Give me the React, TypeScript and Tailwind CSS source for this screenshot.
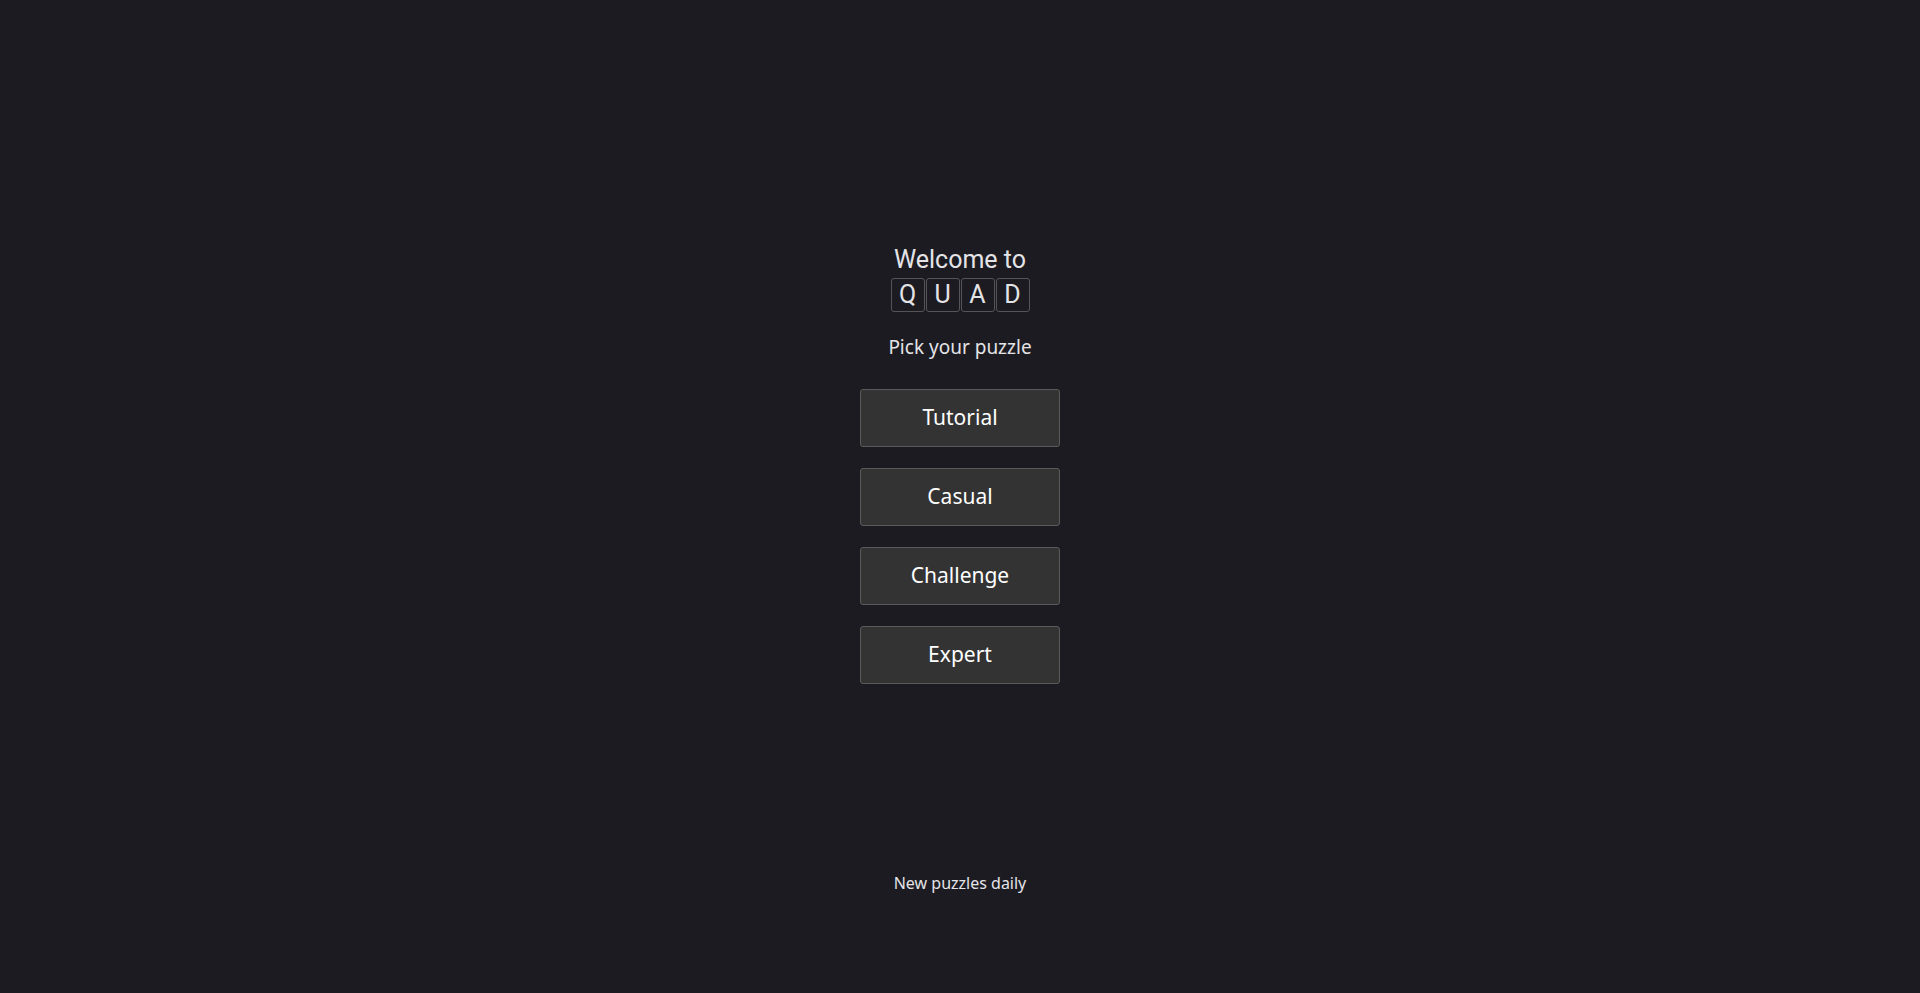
import React from "react";

export default function App() {
  const modes = ["Tutorial", "Casual", "Challenge", "Expert"];
  return (
    <div className="h-[993px] w-full bg-[#1c1b22] flex flex-col items-center text-[#e4e4e7]">
      <div className="pt-[245px] flex flex-col items-center">
        <div className="text-[25px] leading-[29px] font-['Roboto',sans-serif]">Welcome to</div>
        <div className="mt-[4px] flex gap-[1px]">
          {["Q", "U", "A", "D"].map((l) => (
            <div
              key={l}
              className="w-[34px] h-[34px] flex items-center justify-center border border-[#555558] rounded-[3px] text-[25px] font-['Roboto',sans-serif]"
            >
              {l}
            </div>
          ))}
        </div>
        <div className="mt-[22px] text-[19px] leading-[26px] font-['Noto_Sans',sans-serif]">Pick your puzzle</div>
        <div className="mt-[29px] flex flex-col gap-[21px]">
          {modes.map((m) => (
            <button
              key={m}
              className="w-[200px] h-[58px] bg-[#333333] border border-[#5a5a5a] rounded-[3px] text-[21px] text-white font-['Noto_Sans',sans-serif]"
            >
              {m}
            </button>
          ))}
        </div>
      </div>
      <div className="mt-auto mb-[100px] text-[16px] leading-[20px] font-['Noto_Sans',sans-serif]">New puzzles daily</div>
    </div>
  );
}
